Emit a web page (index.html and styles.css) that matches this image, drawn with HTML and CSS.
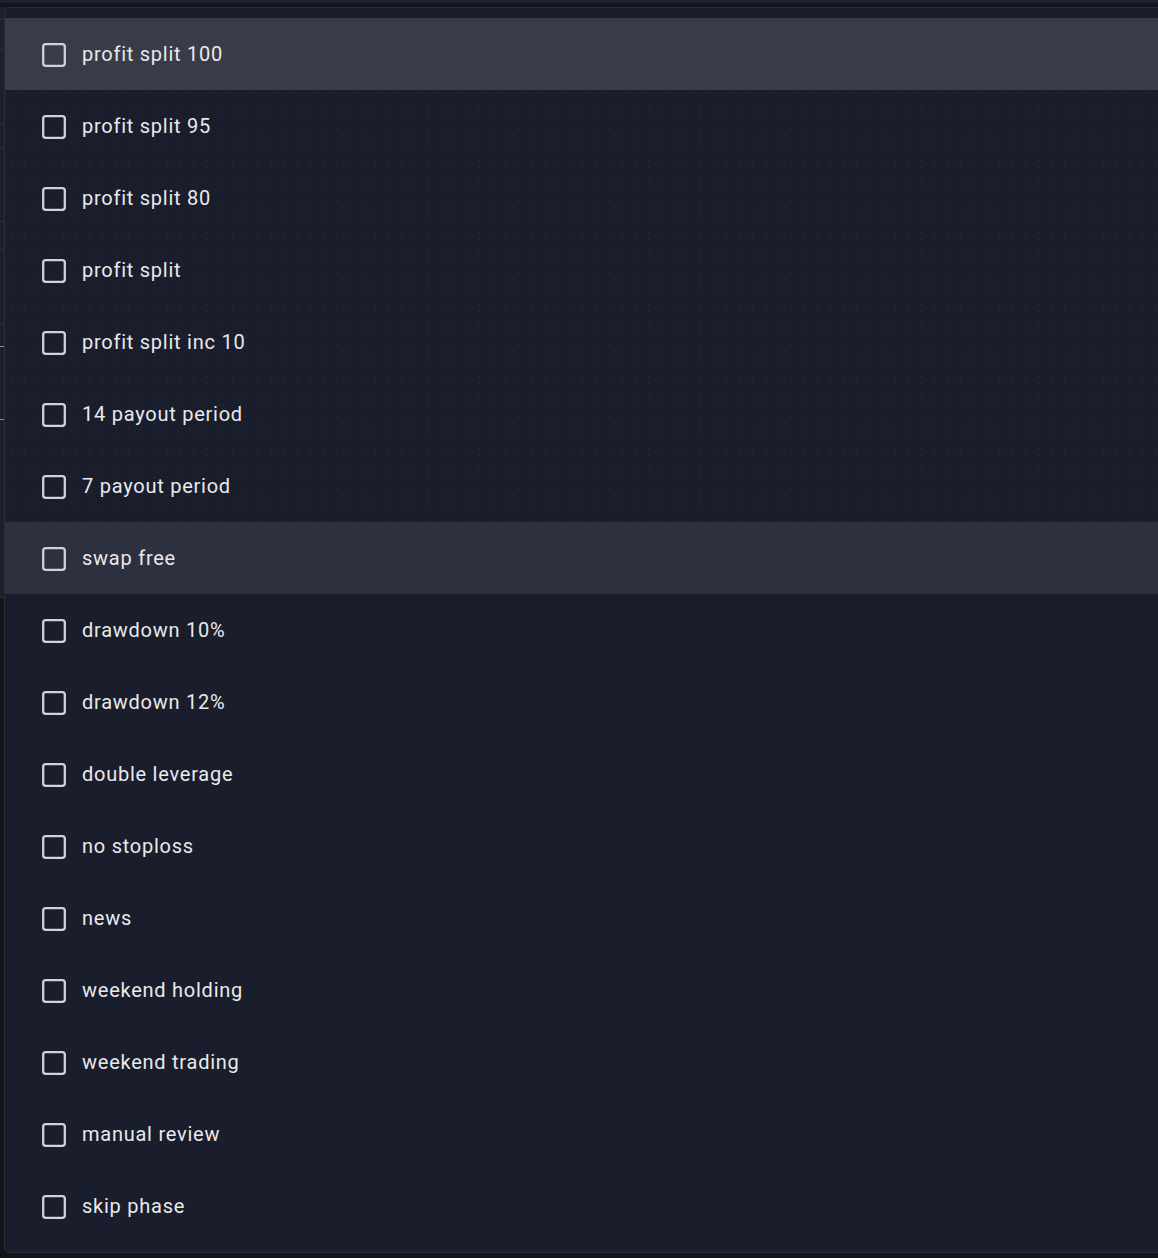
FILE: index.html
```html
<!DOCTYPE html>
<html lang="en">
<head>
<meta charset="utf-8">
<title>Filters menu</title>
<link rel="stylesheet" href="styles.css">
</head>
<body>
<div class="backdrop">
  <div class="topbar"></div>
  <div class="table">
    <div class="trow" style="height:12px"></div>
    <div class="trow" style="height:29px"></div>
    <div class="trow" style="height:73px"></div>
    <div class="trow" style="height:23px"></div>
    <div class="trow" style="height:73px"></div>
    <div class="trow" style="height:27px"></div>
    <div class="trow" style="height:73px"></div>
    <div class="trow tick" style="height:22px"></div>
    <div class="trow tick" style="height:72px"></div>
    <div class="trow" style="height:177px"></div>
  </div>
</div>

<div class="menu">
  <ul class="list">
    <li class="item hover"><span class="box"><svg viewBox="0 0 24 24"><rect x="1.2" y="1.2" width="21.6" height="21.6" rx="2.6"/></svg></span><span class="label">profit split 100</span></li>
    <li class="item dots"><span class="box"><svg viewBox="0 0 24 24"><rect x="1.2" y="1.2" width="21.6" height="21.6" rx="2.6"/></svg></span><span class="label">profit split 95</span></li>
    <li class="item dots"><span class="box"><svg viewBox="0 0 24 24"><rect x="1.2" y="1.2" width="21.6" height="21.6" rx="2.6"/></svg></span><span class="label">profit split 80</span></li>
    <li class="item dots"><span class="box"><svg viewBox="0 0 24 24"><rect x="1.2" y="1.2" width="21.6" height="21.6" rx="2.6"/></svg></span><span class="label">profit split</span></li>
    <li class="item dots"><span class="box"><svg viewBox="0 0 24 24"><rect x="1.2" y="1.2" width="21.6" height="21.6" rx="2.6"/></svg></span><span class="label">profit split inc 10</span></li>
    <li class="item dots"><span class="box"><svg viewBox="0 0 24 24"><rect x="1.2" y="1.2" width="21.6" height="21.6" rx="2.6"/></svg></span><span class="label">14 payout period</span></li>
    <li class="item dots"><span class="box"><svg viewBox="0 0 24 24"><rect x="1.2" y="1.2" width="21.6" height="21.6" rx="2.6"/></svg></span><span class="label">7 payout period</span></li>
    <li class="item selected"><span class="box"><svg viewBox="0 0 24 24"><rect x="1.2" y="1.2" width="21.6" height="21.6" rx="2.6"/></svg></span><span class="label">swap free</span></li>
    <li class="item"><span class="box"><svg viewBox="0 0 24 24"><rect x="1.2" y="1.2" width="21.6" height="21.6" rx="2.6"/></svg></span><span class="label">drawdown 10%</span></li>
    <li class="item"><span class="box"><svg viewBox="0 0 24 24"><rect x="1.2" y="1.2" width="21.6" height="21.6" rx="2.6"/></svg></span><span class="label">drawdown 12%</span></li>
    <li class="item"><span class="box"><svg viewBox="0 0 24 24"><rect x="1.2" y="1.2" width="21.6" height="21.6" rx="2.6"/></svg></span><span class="label">double leverage</span></li>
    <li class="item"><span class="box"><svg viewBox="0 0 24 24"><rect x="1.2" y="1.2" width="21.6" height="21.6" rx="2.6"/></svg></span><span class="label">no stoploss</span></li>
    <li class="item"><span class="box"><svg viewBox="0 0 24 24"><rect x="1.2" y="1.2" width="21.6" height="21.6" rx="2.6"/></svg></span><span class="label">news</span></li>
    <li class="item"><span class="box"><svg viewBox="0 0 24 24"><rect x="1.2" y="1.2" width="21.6" height="21.6" rx="2.6"/></svg></span><span class="label">weekend holding</span></li>
    <li class="item"><span class="box"><svg viewBox="0 0 24 24"><rect x="1.2" y="1.2" width="21.6" height="21.6" rx="2.6"/></svg></span><span class="label">weekend trading</span></li>
    <li class="item"><span class="box"><svg viewBox="0 0 24 24"><rect x="1.2" y="1.2" width="21.6" height="21.6" rx="2.6"/></svg></span><span class="label">manual review</span></li>
    <li class="item"><span class="box"><svg viewBox="0 0 24 24"><rect x="1.2" y="1.2" width="21.6" height="21.6" rx="2.6"/></svg></span><span class="label">skip phase</span></li>
  </ul>
</div>
</body>
</html>
```

FILE: styles.css
```css
html, body {
  margin: 0;
  padding: 0;
}

body {
  width: 1158px;
  height: 1258px;
  overflow: hidden;
  background: #131417;
  font-family: Roboto, "Liberation Sans", sans-serif;
  position: relative;
}

.backdrop {
  display: flex;
  flex-direction: column;
}

.topbar {
  height: 3px;
  background: #1f2233;
  border-bottom: 4px solid #141518;
}

.table {
  background: #1c1f2d;
  display: flex;
  flex-direction: column;
}

.trow {
  border-bottom: 1px solid #2e3140;
}

.trow.tick {
  border-bottom-color: #8a8d96;
}

.menu {
  position: absolute;
  left: 4px;
  top: 7px;
  width: 1180px;
  height: 1244px;
  background: #1a1d2b;
  border: 1px solid #2b2e3a;
  border-radius: 5px;
  box-sizing: content-box;
}

.list {
  list-style: none;
  margin: 0;
  padding: 10px 0;
  display: flex;
  flex-direction: column;
}

.item {
  height: 72px;
  display: flex;
  align-items: center;
  gap: 14px;
  padding-left: 34px;
}

.item.hover {
  background: #393c48;
}

.item.selected {
  background: #2d303e;
}

.item.dots {
  background-color: #1a1d2b;
  background-image:
    radial-gradient(circle, rgba(120, 126, 150, 0.13) 0.7px, transparent 1.1px),
    radial-gradient(circle, rgba(120, 126, 150, 0.09) 0.7px, transparent 1.1px);
  background-size: 13px 11px, 17px 9px;
  background-position: 0 0, 6px 4px;
}

.box {
  width: 29px;
  height: 29px;
  display: flex;
  align-items: center;
  justify-content: center;
  margin-top: 1px;
}

.box svg {
  width: 24px;
  height: 24px;
  display: block;
}

.box rect {
  fill: none;
  stroke: #cfd2d9;
  stroke-width: 2.3;
}

.label {
  color: #e9e9ec;
  font-size: 20px;
  letter-spacing: 0.75px;
  line-height: 24px;
  white-space: nowrap;
}
```
